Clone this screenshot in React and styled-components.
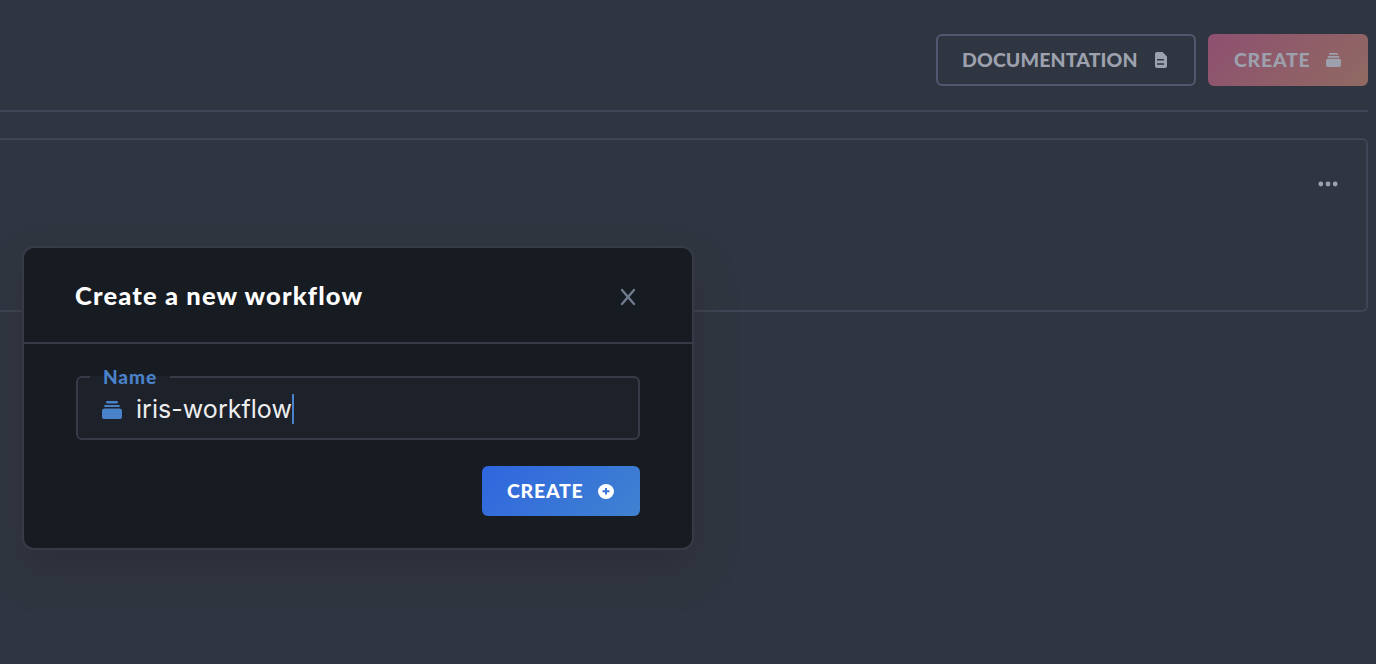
import React from "react";
import styled, { createGlobalStyle } from "styled-components";

const GlobalStyle = createGlobalStyle`
  * { box-sizing: border-box; }
  body {
    margin: 0;
    background: #303641;
    font-family: Lato, "Liberation Sans", sans-serif;
    overflow: hidden;
  }
`;

const Page = styled.div`
  position: relative;
  height: 664px;
  padding-right: 8px;
  background: #303641;
  overflow: hidden;
`;

const Toolbar = styled.header`
  display: flex;
  justify-content: flex-end;
  gap: 12px;
  height: 112px;
  padding-top: 34px;
  border-bottom: 2px solid #3f4554;
`;

const Button = styled.button`
  display: flex;
  align-items: center;
  justify-content: space-between;
  width: ${(p) => p.$width}px;
  height: ${(p) => p.$height || 52}px;
  padding: 0 ${(p) => p.$end || 24}px 1px ${(p) => p.$start || 24}px;
  border: 2px solid ${(p) => p.$border || "transparent"};
  border-radius: 6px;
  background: ${(p) => p.$fill || "transparent"};
  background-origin: border-box;
  color: ${(p) => p.$color || "#9da1ad"};
  font: 900 19.5px/24px Lato, sans-serif;
  letter-spacing: ${(p) => p.$spacing || 0.75}px;
  white-space: nowrap;
  svg { flex: none; position: relative; top: 0.5px; }
`;

const WorkflowCard = styled.section`
  display: flex;
  justify-content: flex-end;
  height: 174px;
  margin-top: 26px;
  padding: 40px 28px 0 0;
  border: 2px solid #3f4554;
  border-left: 0;
  border-radius: 0 6px 6px 0;
`;

const Dialog = styled.div`
  position: absolute;
  left: 22px;
  top: 246px;
  width: 672px;
  height: 304px;
  border: 2px solid #373b48;
  border-radius: 12px;
  background: #171b22;
  box-shadow: 0 20px 40px rgba(42, 41, 51, 0.45);
`;

const DialogHeader = styled.div`
  display: flex;
  align-items: center;
  justify-content: space-between;
  height: 96px;
  padding: 0 56px 0 51px;
  border-bottom: 2px solid #373b48;
`;

const Title = styled.h1`
  margin: 0;
  color: #fff;
  font: 900 25.5px/32px Lato, sans-serif;
  letter-spacing: 1.15px;
  font-variant-ligatures: none;
`;

const CloseIcon = styled.svg`
  margin-top: 4px;
`;

const DialogBody = styled.div`
  display: flex;
  flex-direction: column;
  align-items: flex-end;
  gap: 26px;
  padding: 32px 52px 0;
`;

const Field = styled.label`
  position: relative;
  display: flex;
  align-items: center;
  width: 564px;
  height: 64px;
  padding: 2px 0 0 24px;
  border: 2px solid #373b48;
  border-radius: 6px;
  background: #1d2129;
`;

const FieldName = styled.span`
  position: absolute;
  left: 12px;
  top: -2px;
  display: flex;
  align-items: center;
  width: 80px;
  height: 2px;
  padding-left: 13px;
  background: #1d2129;
  color: #4a82c9;
  font: 900 19px/24px Lato, sans-serif;
  letter-spacing: 0.9px;
`;

const FieldIcon = styled.span`
  display: flex;
  padding-top: 2px;
  color: #4a82c9;
`;

const Value = styled.span`
  margin-left: 14px;
  color: #edeef0;
  font: 400 25px/30px Inter, sans-serif;
  letter-spacing: 0.04px;
  font-variant-ligatures: none;
`;

const Caret = styled.i`
  width: 2px;
  height: 30px;
  background: #4a82c9;
`;

const StackIcon = ({ width = 15, height = 14 }) => (
  <svg width={width} height={height} viewBox="0 0 20 18" preserveAspectRatio="none" fill="currentColor">
    <path d="M6 0h8a1.2 1.2 0 0 1 1.2 2.4H4.8A1.2 1.2 0 0 1 6 0ZM3.8 4h12.4a1 1 0 0 1 1 2H2.8a1 1 0 0 1 1-2Z" />
    <rect y="7.4" width="20" height="10.6" rx="2.6" />
  </svg>
);

const DocumentIcon = () => (
  <svg width="12" height="16" viewBox="0 0 12 16">
    <path fill="currentColor" fillRule="evenodd" d="M2 0h5.5L12 4.5V14a2 2 0 0 1-2 2H2a2 2 0 0 1-2-2V2a2 2 0 0 1 2-2Zm0 7v1.6h7V7Zm0 4.2v1.6h7v-1.6Z" />
  </svg>
);

const PlusIcon = () => (
  <svg width="16" height="15" viewBox="0 0 16 15">
    <ellipse cx="8" cy="7.5" rx="8" ry="7.5" fill="currentColor" />
    <path d="M8 4v6.6M4.5 7.3h7" stroke="#3a73d6" strokeWidth="1.9" />
  </svg>
);

const MoreIcon = () => (
  <svg width="20" height="8" viewBox="0 0 20 8" fill="#9da1ad">
    <circle cx="2.8" cy="4" r="2.4" />
    <circle cx="10" cy="4" r="2.4" />
    <circle cx="17.2" cy="4" r="2.4" />
  </svg>
);

export default function App() {
  return (
    <Page>
      <GlobalStyle />
      <Toolbar>
        <Button $width={260} $border="#525870" $spacing={0.12} $end={27}>
          DOCUMENTATION <DocumentIcon />
        </Button>
        <Button $width={160} $fill="linear-gradient(135deg, #8e5070, #906a62)" $end={25.5}>
          CREATE <StackIcon />
        </Button>
      </Toolbar>
      <WorkflowCard>
        <MoreIcon />
      </WorkflowCard>
      <Dialog role="dialog">
        <DialogHeader>
          <Title>Create a new workflow</Title>
          <CloseIcon width="16" height="18" viewBox="0 0 16 18" fill="none" stroke="#707b8e" strokeWidth="2.4" strokeLinecap="round">
            <path d="M2 2l12 14M14 2 2 16" />
          </CloseIcon>
        </DialogHeader>
        <DialogBody>
          <Field>
            <FieldName>Name</FieldName>
            <FieldIcon>
              <StackIcon width={20} height={18} />
            </FieldIcon>
            <Value>iris-workflow</Value>
            <Caret />
          </Field>
          <Button
            $width={158}
            $height={50}
            $color="#fff"
            $fill="linear-gradient(135deg, #2f66df, #4082d0)"
            $start={23}
          >
            CREATE <PlusIcon />
          </Button>
        </DialogBody>
      </Dialog>
    </Page>
  );
}
